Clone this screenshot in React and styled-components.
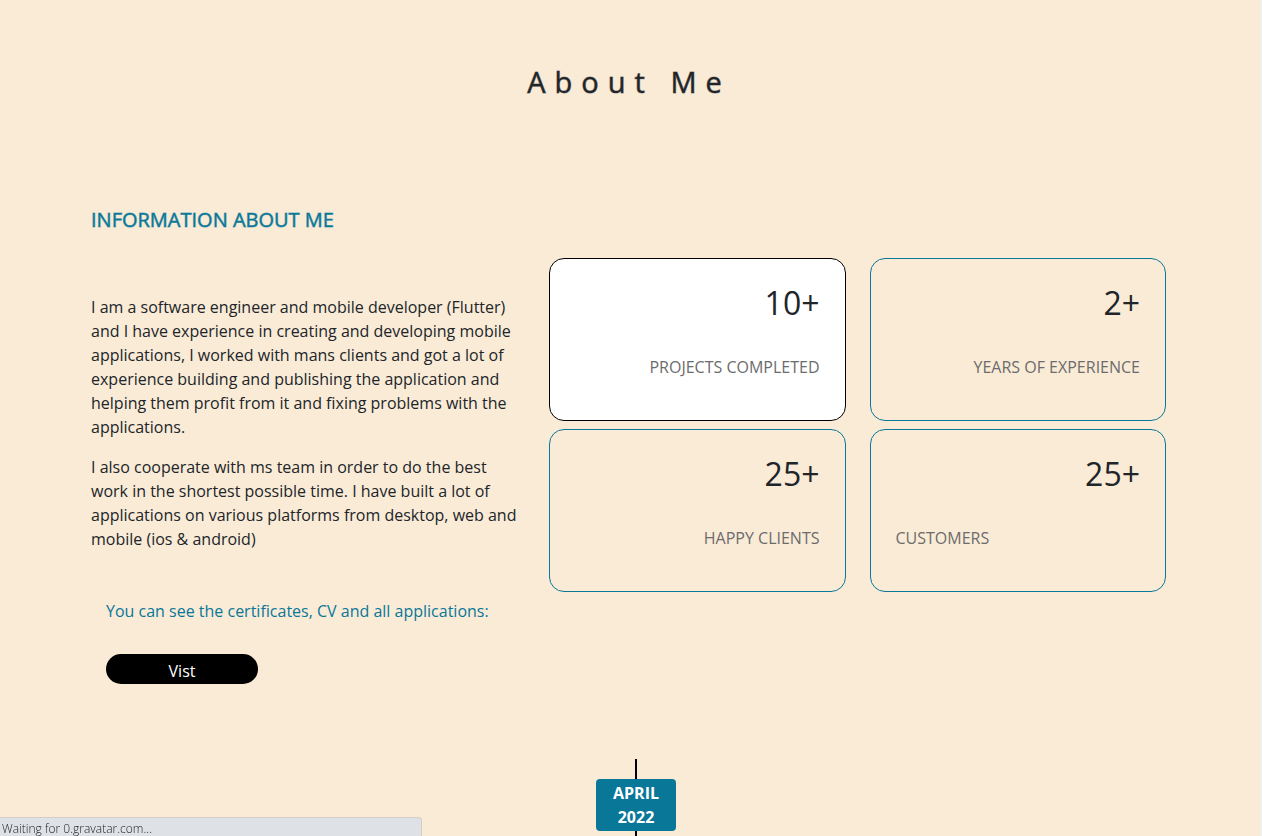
import React from "react";
import styled, { createGlobalStyle } from "styled-components";

const GlobalStyle = createGlobalStyle`
  *, *::before, *::after { box-sizing: border-box; }
  html { background: #f0f0f0; overflow: hidden; }
  body {
    margin: 0;
    background: #f0f0f0;
    color: #212529;
    font: 400 16px/24px "Open Sans", "Noto Sans", sans-serif;
  }
  h1, h2, p { margin: 0; }
`;

const Page = styled.main`
  min-height: 100vh;
  margin-right: 2px;
  padding-top: 60px;
  background: #faebd7;
`;

const Title = styled.h1`
  padding-right: 2px;
  text-align: center;
  font-size: 29px;
  line-height: 44px;
  font-weight: 400;
  letter-spacing: 9px;
  -webkit-text-stroke: 1px rgba(33, 37, 41, 0.5);
`;

const About = styled.section`
  display: grid;
  grid-template-columns: minmax(0, 434fr) minmax(0, 617fr);
  column-gap: 24px;
  align-items: start;
  padding: 104px 94px 0 91px;
`;

const Info = styled.div``;

const Heading = styled.h2`
  color: #087798;
  font-size: 20px;
  line-height: 24px;
  font-weight: 400;
  text-transform: uppercase;
  -webkit-text-stroke: 1px rgba(8, 119, 152, 0.5);
`;

const Bio = styled.div`
  display: grid;
  gap: 16px;
  padding-top: 63px;
`;

const More = styled.div`
  padding: 48px 15px 0;
`;

const Note = styled.p`
  color: #087798;
`;

const VisitButton = styled.button`
  display: block;
  width: 152px;
  height: 30px;
  margin-top: 31px;
  padding: 4px 0 0;
  border: 0;
  border-radius: 15px;
  background: #000;
  color: #fff;
  font: inherit;
  line-height: 24px;
  cursor: pointer;
`;

const Stats = styled.div`
  display: grid;
  grid-template-columns: 1fr 1fr;
  gap: 8px 24px;
  padding-top: 50px;
`;

const Stat = styled.article`
  min-height: 163px;
  padding: 24px 25px;
  border: 1px solid ${({ $active }) => ($active ? "#000" : "#087798")};
  border-radius: 15px;
  background: ${({ $active }) => ($active ? "#fff" : "transparent")};
`;

const Value = styled.p`
  text-align: right;
  font-size: 32px;
  line-height: 40px;
`;

const Label = styled.p`
  margin-top: 32px;
  color: #6c6c6c;
  text-align: ${({ $align }) => $align};
  text-transform: uppercase;
`;

const Timeline = styled.section`
  display: flex;
  flex-direction: column;
  align-items: center;
  padding: 75px 0 0 12px;
`;

const Line = styled.div`
  width: 2px;
  height: ${({ $height }) => $height}px;
  background: #000;
`;

const DateBadge = styled.time`
  width: 80px;
  padding: 2px 16px;
  border-radius: 4px;
  background: #087798;
  color: #fff;
  font-weight: 700;
  text-align: center;
  text-transform: uppercase;
`;

const StatusBar = styled.div`
  position: fixed;
  left: 0;
  bottom: 0;
  width: 422px;
  height: 19px;
  padding: 2px 2px 0;
  border: 1px solid #d5cdc2;
  border-width: 1px 1px 0 0;
  border-top-right-radius: 4px;
  background: #dee1e6;
  color: #1c1e21;
  font: 300 12px/18px "Open Sans", "Noto Sans", sans-serif;
`;

const stats = [
  { value: "10+", label: "Projects completed", active: true, align: "right" },
  { value: "2+", label: "Years of experience", align: "right" },
  { value: "25+", label: "Happy clients", align: "right" },
  { value: "25+", label: "Customers", align: "left" },
];

export default function App() {
  return (
    <>
      <GlobalStyle />
      <Page>
        <Title>About Me</Title>
        <About>
          <Info>
            <Heading>Information about me</Heading>
            <Bio>
              <p>
                I am a software engineer and mobile developer (Flutter) and I have
                experience in creating and developing mobile applications, I worked
                with mans clients and got a lot of experience building and publishing
                the application and helping them profit from it and fixing problems
                with the applications.
              </p>
              <p>
                I also cooperate with ms team in order to do the best work in the
                shortest possible time. I have built a lot of applications on various
                platforms from desktop, web and mobile (ios &amp; android)
              </p>
            </Bio>
            <More>
              <Note>You can see the certificates, CV and all applications:</Note>
              <VisitButton type="button">Vist</VisitButton>
            </More>
          </Info>
          <Stats>
            {stats.map(({ value, label, active, align }) => (
              <Stat key={label} $active={active}>
                <Value>{value}</Value>
                <Label $align={align}>{label}</Label>
              </Stat>
            ))}
          </Stats>
        </About>
        <Timeline>
          <Line $height={20} />
          <DateBadge dateTime="2022-04">April 2022</DateBadge>
          <Line $height={5} />
        </Timeline>
      </Page>
      <StatusBar role="status">Waiting for 0.gravatar.com...</StatusBar>
    </>
  );
}
